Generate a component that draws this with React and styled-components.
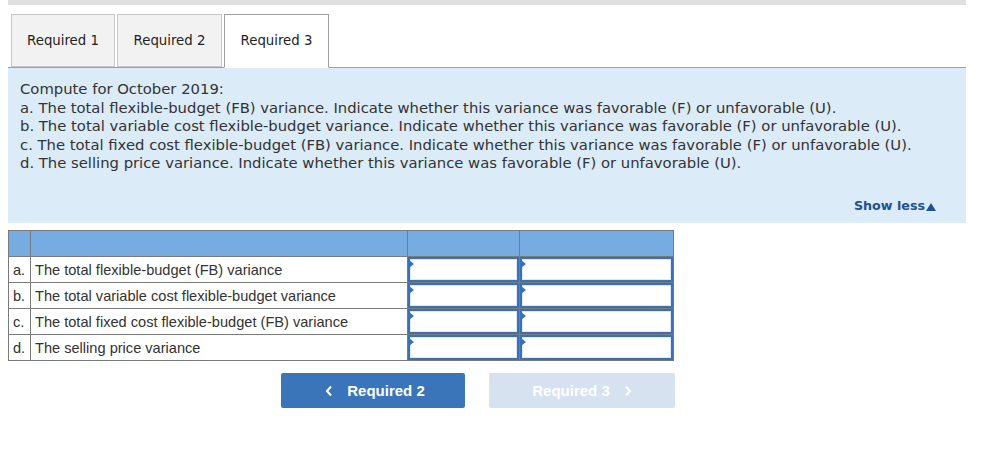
import React from 'react';
import styled, { createGlobalStyle } from 'styled-components';

const GlobalStyle = createGlobalStyle`
  body {
    margin: 0;
    background: #fff;
    font-family: "DejaVu Sans", Verdana, sans-serif;
    color: #333;
  }
`;

const Page = styled.div`
  width: 958px;
  padding: 0 8px;
`;

const TopBar = styled.div`
  height: 5px;
  background: #e0e0e0;
`;

const TabRow = styled.div`
  display: flex;
  gap: 2px;
  margin-top: 9px;
  padding-left: 3px;
  margin-bottom: -1px;
  position: relative;
  z-index: 1;
`;

const Tab = styled.div`
  width: ${(p) => p.w}px;
  display: flex;
  align-items: center;
  justify-content: center;
  font-size: 13.3px;
  color: #222;
  background: ${(p) => (p.active ? '#fff' : '#f2f2f2')};
  border: 1px solid ${(p) => (p.active ? '#a0a0a0' : '#c8c8c8')};
  border-bottom: ${(p) => (p.active ? '1px solid #fff' : '1px solid #c8c8c8')};
  box-sizing: border-box;
  height: ${(p) => (p.active ? '54px' : '53px')};
  padding-bottom: ${(p) => (p.active ? '1px' : '0')};
  align-self: flex-start;
`;

const Panel = styled.div`
  background: #dbebf8;
  border-top: 1px solid #a0a0a0;
  height: 156px;
  box-sizing: border-box;
  padding: 12px 12px 0;
  display: flex;
  flex-direction: column;
`;

const Prompt = styled.div`
  font-size: 14.8px;
  line-height: 18.5px;
  color: #333;
`;

const ShowLess = styled.div`
  margin-top: auto;
  margin-bottom: 10px;
  align-self: flex-end;
  margin-right: 18px;
  font-size: 12.7px;
  font-weight: bold;
  color: #1f5190;
  display: flex;
  align-items: center;
  gap: 1px;
`;

const Triangle = styled.span`
  display: inline-block;
  width: 0;
  height: 0;
  border-left: 5px solid transparent;
  border-right: 5px solid transparent;
  border-bottom: 8px solid #1f5190;
  margin-top: 2px;
`;

const Table = styled.table`
  margin-top: 7px;
  border-collapse: collapse;
  font-family: "Liberation Sans", Arial, sans-serif;
  font-size: 14.6px;
  color: #333;
`;

const HeadCell = styled.th`
  background: #77ace3;
  border: 1px solid #7a7a7a;
  height: 25px;
  padding: 0;
  width: ${(p) => p.w}px;
`;

const TextCell = styled.td`
  border: 1px solid #7a7a7a;
  height: 25px;
  padding: 0 0 0 4px;
  white-space: nowrap;
`;

const InputCell = styled.td`
  border: 1px solid #7a7a7a;
  padding: 0;
  height: 25px;
  position: relative;
`;

const InputBox = styled.div`
  position: absolute;
  inset: 0;
  border: 2px solid #3b71b3;
  box-shadow: inset 0 0 0 1px #dbe8f7;
  background: #fff;
  &::before {
    content: '';
    position: absolute;
    left: -1px;
    top: 1px;
    border-left: 5px solid #3b71b3;
    border-top: 4px solid transparent;
    border-bottom: 4px solid transparent;
  }
`;

const NavRow = styled.div`
  display: flex;
  gap: 24px;
  margin-top: 12px;
  margin-left: 273px;
`;

const NavButton = styled.div`
  width: ${(p) => p.w}px;
  height: 35px;
  box-sizing: border-box;
  border-radius: 2px;
  display: flex;
  align-items: center;
  justify-content: center;
  gap: 14px;
  padding-left: ${(p) => (p.disabled ? '0' : '4px')};
  font-family: "Liberation Sans", Arial, sans-serif;
  font-weight: bold;
  font-size: 15px;
  color: #fff;
  background: ${(p) => (p.disabled ? '#d6e2f0' : '#3a75b9')};
`;

const Chevron = ({ dir }) => (
  <svg width="8" height="12" viewBox="0 0 8 12">
    <path
      d={dir === 'left' ? 'M6 1.5 L2 6 L6 10.5' : 'M2 1.5 L6 6 L2 10.5'}
      fill="none"
      stroke="#fff"
      strokeWidth="2"
    />
  </svg>
);

const rows = [
  ['a.', 'The total flexible-budget (FB) variance'],
  ['b.', 'The total variable cost flexible-budget variance'],
  ['c.', 'The total fixed cost flexible-budget (FB) variance'],
  ['d.', 'The selling price variance'],
];

export default function App() {
  return (
    <Page>
      <GlobalStyle />
      <TopBar />
      <TabRow>
        <Tab w={104}>Required 1</Tab>
        <Tab w={105}>Required 2</Tab>
        <Tab w={105} active>Required 3</Tab>
      </TabRow>
      <Panel>
        <Prompt>
          Compute for October 2019:
          <br />
          a. The total flexible-budget (FB) variance. Indicate whether this variance was favorable (F) or unfavorable (U).
          <br />
          b. The total variable cost flexible-budget variance. Indicate whether this variance was favorable (F) or unfavorable (U).
          <br />
          c. The total fixed cost flexible-budget (FB) variance. Indicate whether this variance was favorable (F) or unfavorable (U).
          <br />
          d. The selling price variance. Indicate whether this variance was favorable (F) or unfavorable (U).
        </Prompt>
        <ShowLess>
          Show less
          <Triangle />
        </ShowLess>
      </Panel>
      <Table>
        <thead>
          <tr>
            <HeadCell w={21} />
            <HeadCell w={376} />
            <HeadCell w={111} />
            <HeadCell w={153} />
          </tr>
        </thead>
        <tbody>
          {rows.map(([letter, label]) => (
            <tr key={letter}>
              <TextCell>{letter}</TextCell>
              <TextCell>{label}</TextCell>
              <InputCell>
                <InputBox />
              </InputCell>
              <InputCell>
                <InputBox />
              </InputCell>
            </tr>
          ))}
        </tbody>
      </Table>
      <NavRow>
        <NavButton w={184}>
          <Chevron dir="left" />
          Required 2
        </NavButton>
        <NavButton w={186} disabled>
          Required 3
          <Chevron dir="right" />
        </NavButton>
      </NavRow>
    </Page>
  );
}
